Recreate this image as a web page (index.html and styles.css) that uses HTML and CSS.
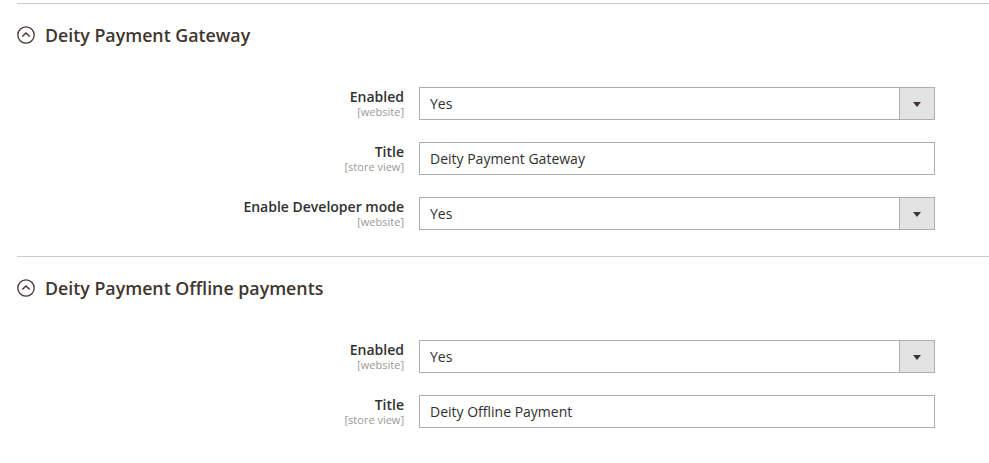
FILE: index.html
```html
<!DOCTYPE html>
<html>
<head>
<meta charset="utf-8">
<link rel="stylesheet" href="styles.css">
</head>
<body>
<div class="page">
  <section class="section">
    <div class="section-head">
      <svg class="toggle" width="18" height="18" viewBox="0 0 18 18"><circle cx="9" cy="9" r="8.2" fill="none" stroke="#41362f" stroke-width="1.3"/><path d="M5.3 10.6 L9 7 L12.7 10.6" fill="none" stroke="#41362f" stroke-width="1.4"/></svg>
      <h2 class="section-title">Deity Payment Gateway</h2>
    </div>
    <div class="rows">
      <div class="row">
        <div class="label"><span class="label-text">Enabled</span><span class="scope">[website]</span></div>
        <div class="control select"><span class="value">Yes</span><span class="btn"><span class="arrow"></span></span></div>
      </div>
      <div class="row">
        <div class="label"><span class="label-text">Title</span><span class="scope">[store view]</span></div>
        <div class="control"><span class="value">Deity Payment Gateway</span></div>
      </div>
      <div class="row">
        <div class="label"><span class="label-text">Enable Developer mode</span><span class="scope">[website]</span></div>
        <div class="control select"><span class="value">Yes</span><span class="btn"><span class="arrow"></span></span></div>
      </div>
    </div>
  </section>
  <section class="section">
    <div class="section-head">
      <svg class="toggle" width="18" height="18" viewBox="0 0 18 18"><circle cx="9" cy="9" r="8.2" fill="none" stroke="#41362f" stroke-width="1.3"/><path d="M5.3 10.6 L9 7 L12.7 10.6" fill="none" stroke="#41362f" stroke-width="1.4"/></svg>
      <h2 class="section-title">Deity Payment Offline payments</h2>
    </div>
    <div class="rows">
      <div class="row">
        <div class="label"><span class="label-text">Enabled</span><span class="scope">[website]</span></div>
        <div class="control select"><span class="value">Yes</span><span class="btn"><span class="arrow"></span></span></div>
      </div>
      <div class="row">
        <div class="label"><span class="label-text">Title</span><span class="scope">[store view]</span></div>
        <div class="control"><span class="value">Deity Offline Payment</span></div>
      </div>
    </div>
  </section>
</div>
</body>
</html>
```

FILE: styles.css
```css
* { box-sizing: border-box; }
html, body { margin: 0; padding: 0; background: #fff; }
body { font-family: "Open Sans", "Liberation Sans", sans-serif; color: #303030; }
.page { padding-top: 3px; padding-left: 17px; }
.section { border-top: 1px solid #cccccc; padding-bottom: 26px; }
.section-head { display: flex; align-items: center; gap: 10px; padding-top: 20px; height: 42px; }
.toggle { flex: none; display: block; }
.section-title { margin: 0; font-size: 17.8px; font-weight: 600; line-height: 22px; color: #41362f; }
.rows { display: flex; flex-direction: column; gap: 22px; margin-top: 41px; }
.row { display: flex; gap: 15px; }
.label { width: 387px; display: flex; flex-direction: column; align-items: flex-end; text-align: right; }
.label-text { display: block; font-size: 14px; font-weight: 600; line-height: 18px; padding-top: 1px; color: #303030; }
.scope { display: block; font-size: 11px; line-height: 12px; color: #999999; }
.control { width: 516px; height: 33px; border: 1px solid #adadad; display: flex; align-items: center; padding-left: 10px; font-size: 14px; color: #303030; background: #fff; }
.value { flex: 1; }
.select .btn { width: 35px; align-self: stretch; background: #e3e3e3; border-left: 1px solid #adadad; display: flex; align-items: center; justify-content: center; }
.arrow { width: 0; height: 0; border-left: 4.5px solid transparent; border-right: 4.5px solid transparent; border-top: 5px solid #41362f; margin-top: 1px; }
```
